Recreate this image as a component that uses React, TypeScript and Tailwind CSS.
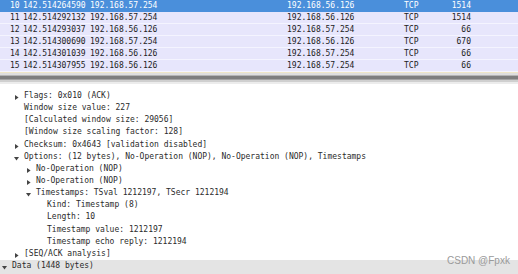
const packets = [
  { no: '10', time: '142.514264590', src: '192.168.57.254', dst: '192.168.56.126', proto: 'TCP', len: '1514' },
  { no: '11', time: '142.514292132', src: '192.168.57.254', dst: '192.168.56.126', proto: 'TCP', len: '1514' },
  { no: '12', time: '142.514293037', src: '192.168.56.126', dst: '192.168.57.254', proto: 'TCP', len: '66' },
  { no: '13', time: '142.514300690', src: '192.168.57.254', dst: '192.168.56.126', proto: 'TCP', len: '670' },
  { no: '14', time: '142.514301039', src: '192.168.56.126', dst: '192.168.57.254', proto: 'TCP', len: '66' },
  { no: '15', time: '142.514307955', src: '192.168.56.126', dst: '192.168.57.254', proto: 'TCP', len: '66' },
];

type Node = { level: number; text: string; arrow?: 'open' | 'closed'; shaded?: boolean };

const tree: Node[] = [
  { level: 1, text: 'Flags: 0x010 (ACK)', arrow: 'closed' },
  { level: 1, text: 'Window size value: 227' },
  { level: 1, text: '[Calculated window size: 29056]' },
  { level: 1, text: '[Window size scaling factor: 128]' },
  { level: 1, text: 'Checksum: 0x4643 [validation disabled]', arrow: 'closed' },
  { level: 1, text: 'Options: (12 bytes), No-Operation (NOP), No-Operation (NOP), Timestamps', arrow: 'open' },
  { level: 2, text: 'No-Operation (NOP)', arrow: 'closed' },
  { level: 2, text: 'No-Operation (NOP)', arrow: 'closed' },
  { level: 2, text: 'Timestamps: TSval 1212197, TSecr 1212194', arrow: 'open' },
  { level: 3, text: 'Kind: Timestamp (8)' },
  { level: 3, text: 'Length: 10' },
  { level: 3, text: 'Timestamp value: 1212197' },
  { level: 3, text: 'Timestamp echo reply: 1212194' },
  { level: 1, text: '[SEQ/ACK analysis]', arrow: 'closed' },
  { level: 0, text: 'Data (1448 bytes)', arrow: 'open', shaded: true },
];

const indent = ['pl-[12px]', 'pl-[24px]', 'pl-[36px]', 'pl-[47px]'];

function Arrow({ kind }: { kind: 'open' | 'closed' }) {
  return kind === 'closed' ? (
    <svg width="4" height="5" viewBox="0 0 4 5" className="absolute -left-[9px] top-[4px]">
      <path d="M0 0 L3.6 2.5 L0 5 Z" fill="#444" />
    </svg>
  ) : (
    <svg width="5" height="4" viewBox="0 0 5 4" className="absolute -left-[10px] top-[5px]">
      <path d="M0 0 L5 0 L2.5 3.6 Z" fill="#444" />
    </svg>
  );
}

export default function App() {
  return (
    <div className="relative w-[518px] h-[274px] overflow-hidden bg-white font-['DejaVu_Sans_Mono',monospace] text-[8px]">
      {/* packet list */}
      <div>
        {packets.map((p, i) => (
          <div
            key={p.no}
            className={
              'flex h-[12px] items-center leading-[12px] whitespace-pre border-b ' +
              (i === 0
                ? 'bg-[#4a8fdb] text-white border-[#4a8fdb]'
                : 'bg-[#e7e6fc] text-[#222] border-[#f4f4ff]')
            }
          >
            <span className="w-[23px] pl-[10px]">{p.no}</span>
            <span className="w-[67px]">{p.time}</span>
            <span className="w-[197px]">{p.src}</span>
            <span className="w-[117px]">{p.dst}</span>
            <span className="w-[37px]">{p.proto}</span>
            <span className="w-[30px] text-right">{p.len}</span>
          </div>
        ))}
      </div>

      {/* splitter */}
      <div className="flex flex-col">
        <div className="h-[1px] bg-[#efe6c8]" />
        <div className="h-[2px] bg-[#dedede]" />
        <div className="h-[1px] bg-[#b4b4b4]" />
        <div className="h-[3px] bg-[#7e7e7e]" />
        <div className="h-[1px] bg-[#a2a2a2]" />
        <div className="h-[2px] bg-[#cfcfcf]" />
        <div className="h-[2px] bg-[#ececec]" />
      </div>

      {/* packet details */}
      <div className="pt-[6px] text-[#2b2b2b]">
        {tree.map((n, i) => (
          <div
            key={i}
            className={'h-[12.15px] leading-[12px] whitespace-pre ' + indent[n.level] + (n.shaded ? ' bg-[#e4e4e4] h-[14px]' : '')}
          >
            <span className="relative">
              {n.arrow && <Arrow kind={n.arrow} />}
              {n.text}
            </span>
          </div>
        ))}
      </div>

      <div className="absolute left-[447px] top-[253px] font-['Liberation_Sans',sans-serif] text-[10px] text-[#9a9a9a]">
        CSDN @Fpxk
      </div>
    </div>
  );
}
